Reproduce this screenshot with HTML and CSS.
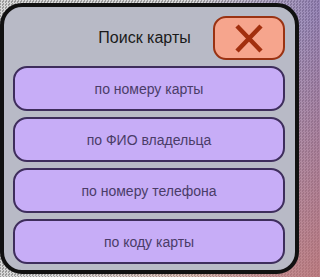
FILE: index.html
```html
<!DOCTYPE html>
<html lang="ru">
<head>
<meta charset="utf-8">
<link rel="stylesheet" href="styles.css">
</head>
<body>
<div class="dialog">
  <div class="header">
    <div class="title">Поиск карты</div>
    <button class="close" aria-label="Закрыть">
      <svg width="28" height="29" viewBox="0 0 28 29"><path d="M2 2 L26 27 M26 2 L2 27" stroke="#a22f0e" stroke-width="4.5" fill="none"/></svg>
    </button>
  </div>
  <div class="options">
    <div class="option">по номеру карты</div>
    <div class="option">по ФИО владельца</div>
    <div class="option">по номеру телефона</div>
    <div class="option">по коду карты</div>
  </div>
</div>
</body>
</html>
```
FILE: styles.css
```css
html, body {
  margin: 0;
  padding: 0;
}
body {
  width: 300px;
  height: 277px;
  overflow: hidden;
  font-family: "Liberation Sans", Arial, sans-serif;
  background:
    linear-gradient(135deg, rgba(255,255,255,0) 55%, rgba(220,120,90,0.55) 100%),
    linear-gradient(90deg, rgba(200,200,200,0) 60%, rgba(110,80,160,0.6) 100%),
    repeating-conic-gradient(#d8d8d8 0 25%, #9a9a9a 0 50%) 0 0 / 3px 3px;
  padding-top: 3px;
  box-sizing: border-box;
}
.dialog {
  width: 299px;
  height: 271px;
  box-sizing: border-box;
  border: 4px solid #111;
  border-radius: 22px;
  background: #b8bac6;
  padding: 9px 10px 6px 9px;
  display: flex;
  flex-direction: column;
  gap: 6px;
}
.header {
  display: flex;
  align-items: center;
  height: 44px;
}
.title {
  flex: 1;
  text-align: center;
  padding-left: 63px;
  font-size: 16px;
  color: #1a1a1a;
}
.close {
  width: 72px;
  height: 44px;
  box-sizing: border-box;
  border: 2.5px solid #9a3212;
  border-radius: 13px;
  background: #f6a58d;
  display: flex;
  align-items: center;
  justify-content: center;
  padding: 0;
  margin: 0;
}
.close svg {
  display: block;
}
.options {
  display: flex;
  flex-direction: column;
  gap: 6px;
}
.option {
  height: 45px;
  box-sizing: border-box;
  border: 2.5px solid #3e2d5c;
  border-radius: 14px;
  background: #c7adf7;
  display: flex;
  align-items: center;
  justify-content: center;
  font-size: 14px;
  color: #4a3c68;
}
```
